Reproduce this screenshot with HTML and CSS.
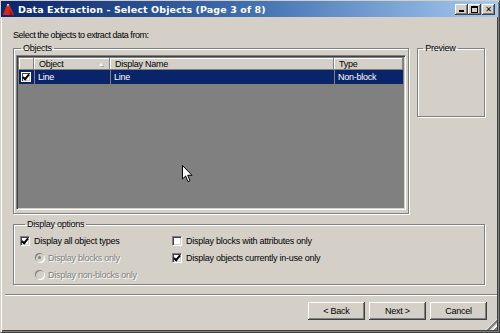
FILE: index.html
```html
<!DOCTYPE html>
<html lang="en">

<head>
  <meta charset="UTF-8">
  <title>Data Extraction - Select Objects</title>
  <link rel="stylesheet" href="styles.css">
</head>

<body>
  <div class="window">
    <div class="titlebar">
      <svg class="app-icon" width="13" height="13" viewBox="0 0 13 13">
        <rect x="0" y="0" width="13" height="13" fill="#0b2a6e" />
        <path d="M1 12 L5 1 L7 1 L12 12 Z" fill="#d8261c" />
        <path d="M5 1 L7 1 L6 4 Z" fill="#f4f0e8" />
        <path d="M7 6 L11 12 L8 12 Z" fill="#9c1410" />
      </svg>
      <span class="title">Data Extraction - Select Objects (Page 3 of 8)</span>
      <div class="caption-buttons">
        <button class="cap-btn"><span class="min-glyph"></span></button>
        <button class="cap-btn"><span class="max-glyph"></span></button>
        <button class="cap-btn close">&#x2715;</button>
      </div>
    </div>

    <div class="content">
      <p class="prompt">Select the objects to extract data from:</p>

      <div class="top-row">
        <fieldset class="group objects">
          <legend>Objects</legend>
          <div class="list">
            <div class="list-header">
              <div class="col"></div>
              <div class="col">Object <span class="sort">&#9650;</span></div>
              <div class="col">Display Name</div>
              <div class="col">Type</div>
            </div>
            <div class="list-row selected">
              <div class="cell"><span class="check small checked"></span></div>
              <div class="cell">Line</div>
              <div class="cell">Line</div>
              <div class="cell">Non-block</div>
            </div>
          </div>
        </fieldset>

        <fieldset class="group preview">
          <legend>Preview</legend>
        </fieldset>
      </div>

      <fieldset class="group options">
        <legend>Display options</legend>
        <div class="options-grid">
          <label class="opt"><span class="check checked"></span>Display all object types</label>
          <label class="opt"><span class="check"></span>Display blocks with attributes only</label>
          <label class="opt radio-opt disabled"><span class="radio on"></span>Display blocks only</label>
          <label class="opt"><span class="check checked"></span>Display objects currently in-use only</label>
          <label class="opt radio-opt disabled"><span class="radio"></span>Display non-blocks only</label>
        </div>
      </fieldset>
    </div>

    <div class="separator"></div>

    <div class="footer">
      <button class="btn">&lt; Back</button>
      <button class="btn">Next &gt;</button>
      <button class="btn">Cancel</button>
    </div>

    <div class="grip"></div>

    <svg class="cursor" width="11" height="18" viewBox="0 0 11 18">
      <path d="M0.5 0.5 L0.5 14 L3.6 11 L6 16.6 L8 15.7 L5.7 10.3 L10 10.3 Z" fill="#fff" stroke="#000" stroke-width="1" />
    </svg>
  </div>
</body>

</html>
```

FILE: styles.css
```css
body {
  margin: 0;
  font-family: 'Liberation Sans', 'DejaVu Sans', sans-serif;
  font-size: 9px;
  letter-spacing: -0.25px;
  color: #000;
}

.window {
  position: relative;
  width: 500px;
  height: 333px;
  box-sizing: border-box;
  background: #d4d0c8;
  border-left: 1px solid #d4d0c8;
  border-top: 1px solid #d4d0c8;
  border-right: 1px solid #404040;
  border-bottom: 1px solid #404040;
  box-shadow: inset 1px 1px 0 #fff, inset -1px -1px 0 #808080, inset -2px -2px 0 #404040;
  padding: 2px 3px 3px 3px;
  display: flex;
  flex-direction: column;
  overflow: hidden;
}

/* title bar */
.titlebar {
  height: 16px;
  flex: none;
  display: flex;
  align-items: center;
  gap: 3px;
  padding: 0 2px 0 1px;
  margin: -2px -2px 0 -3px;
  background: linear-gradient(to right, #0a246a 0%, #4170b0 50%, #a6caf0 100%);
}

.app-icon {
  flex: none;
}

.title {
  color: #fff;
  font-weight: bold;
  font-family: 'DejaVu Sans', sans-serif;
  font-size: 9.5px;
  letter-spacing: 0.1px;
  flex: 1;
}

.caption-buttons {
  display: flex;
  margin-right: 1px;
}

.cap-btn {
  width: 13px;
  height: 11px;
  padding: 0;
  margin: 0;
  background: #d4d0c8;
  border: none;
  box-shadow: inset -1px -1px 0 #404040, inset 1px 1px 0 #fff, inset -2px -2px 0 #808080;
  font-size: 8px;
  font-weight: bold;
  line-height: 11px;
  display: flex;
  align-items: center;
  justify-content: center;
}

.cap-btn.close {
  margin-left: 1px;
  font-family: 'DejaVu Sans', sans-serif;
}

.min-glyph {
  width: 5px;
  height: 2px;
  background: #000;
  margin-top: 4px;
}

.max-glyph {
  width: 5px;
  height: 4px;
  border: 1px solid #000;
  border-top-width: 2px;
}

/* body */
.content {
  padding: 0 11px 0 9px;
}

.prompt {
  margin: 12px 0 1px;
  height: 12px;
  line-height: 12px;
  letter-spacing: -0.45px;
}

.group {
  margin: 0;
  padding: 0;
  min-width: 0;
  border: 1px solid #808080;
  box-shadow: 1px 1px 0 #fff, inset 1px 1px 0 #fff;
}

.group legend {
  padding: 0 2px;
  margin-left: 5px;
  line-height: 12px;
}

.top-row {
  display: flex;
  align-items: flex-start;
  gap: 8px;
}

.objects {
  width: 398px;
  height: 172px;
  box-sizing: border-box;
  padding: 1px 2px 2px 2px;
}

.preview {
  width: 68px;
  height: 75px;
  box-sizing: border-box;
}

/* list view */
.list {
  height: 155px;
  box-sizing: border-box;
  background: #808080;
  border-top: 1px solid #808080;
  border-left: 1px solid #808080;
  border-right: 1px solid #fff;
  border-bottom: 1px solid #fff;
  box-shadow: inset 1px 1px 0 #404040, inset -1px -1px 0 #d4d0c8;
  padding: 2px 2px 0 2px;
}

.list-header,
.list-row {
  display: grid;
  grid-template-columns: 15px 76px 224px 1fr;
}

.list-header .col {
  height: 12px;
  line-height: 12px;
  background: #d4d0c8;
  padding-left: 5px;
  box-shadow: inset -1px -1px 0 #808080, inset 1px 1px 0 #fff;
  position: relative;
}

.sort {
  position: absolute;
  right: 6px;
  top: 0;
  font-size: 6px;
  color: #fff;
  text-shadow: 1px 1px 0 #a0a0a0;
}

.list-row {
  height: 14px;
  line-height: 14px;
}

.list-row.selected {
  background: #0a246a;
  color: #fff;
}

.list-row .cell {
  padding-left: 4px;
  box-shadow: inset 1px 0 0 #808080;
}

.list-row .cell:first-child {
  box-shadow: none;
  padding-left: 2px;
  display: flex;
  align-items: center;
}

/* check boxes and radios */
.check {
  display: inline-block;
  width: 8px;
  height: 8px;
  background: #fff;
  border-top: 1px solid #808080;
  border-left: 1px solid #808080;
  border-right: 1px solid #fff;
  border-bottom: 1px solid #fff;
  box-shadow: inset 1px 1px 0 #404040, inset -1px -1px 0 #d4d0c8;
  position: relative;
  flex: none;
}

.check.checked::after {
  content: "";
  position: absolute;
  left: 2px;
  top: 0px;
  width: 2px;
  height: 5px;
  border-right: 2px solid #000;
  border-bottom: 2px solid #000;
  transform: rotate(40deg);
}

.check.small {
  width: 8px;
  height: 8px;
  border-color: #fff;
}

.radio {
  display: inline-block;
  width: 9px;
  height: 9px;
  border-radius: 50%;
  background: #d4d0c8;
  box-shadow: inset 1px 1px 0 #808080, 1px 1px 0 #fff;
  position: relative;
  flex: none;
}

.radio.on::after {
  content: "";
  position: absolute;
  left: 3px;
  top: 3px;
  width: 3px;
  height: 3px;
  border-radius: 50%;
  background: #808080;
}

.options {
  height: 67px;
  box-sizing: border-box;
  margin-top: 4px;
  padding: 2px 0 0 6px;
}

.options-grid {
  display: grid;
  grid-template-columns: 152px 1fr;
  grid-auto-rows: 17px;
}

.opt {
  display: flex;
  align-items: center;
  gap: 4px;
}

.radio-opt {
  padding-left: 15px;
  gap: 4px;
}

.radio-opt:last-child {
  grid-column: 1;
}

.disabled {
  color: #808080;
  text-shadow: 1px 1px 0 #fff;
}

/* footer */
.separator {
  margin: 9px -1px 0 1px;
  height: 0;
  border-top: 1px solid #808080;
  border-bottom: 1px solid #fff;
}

.footer {
  display: flex;
  justify-content: flex-end;
  gap: 4px;
  padding: 6px 9px 0 0;
}

.btn {
  width: 57px;
  height: 18px;
  padding: 0;
  font-family: inherit;
  font-size: 9px;
  letter-spacing: -0.25px;
  background: #d4d0c8;
  border: none;
  box-shadow: inset -1px -1px 0 #404040, inset 1px 1px 0 #fff, inset -2px -2px 0 #808080;
}

.grip {
  position: absolute;
  right: 2px;
  bottom: 2px;
  width: 11px;
  height: 11px;
  background: repeating-linear-gradient(135deg, transparent 0 2px, #fff 2px 3px, #808080 3px 5px);
  clip-path: polygon(100% 0, 100% 100%, 0 100%);
}

.cursor {
  position: absolute;
  left: 181px;
  top: 164px;
}
```
